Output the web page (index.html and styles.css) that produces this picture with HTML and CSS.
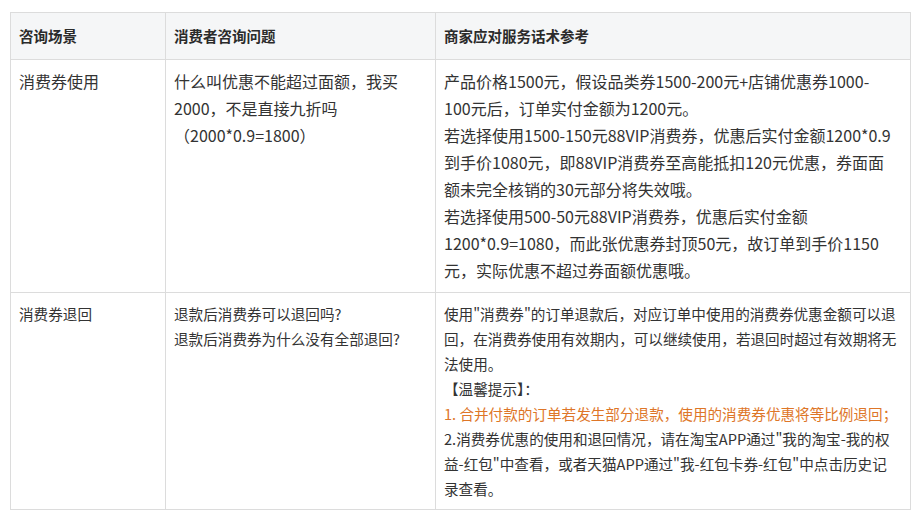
FILE: index.html
```html
<!DOCTYPE html>
<html lang="zh-CN">
<head>
<meta charset="utf-8">
<title>消费券咨询</title>
<link rel="stylesheet" href="styles.css">
</head>
<body>
<div class="page">
  <table class="faq">
    <colgroup>
      <col class="c1">
      <col class="c2">
      <col class="c3">
    </colgroup>
    <thead>
      <tr>
        <th>咨询场景</th>
        <th>消费者咨询问题</th>
        <th>商家应对服务话术参考</th>
      </tr>
    </thead>
    <tbody>
      <tr class="row-use">
        <td>消费券使用</td>
        <td>什么叫优惠不能超过面额，我买<br>2000，不是直接九折吗<br>（2000*0.9=1800）</td>
        <td>产品价格1500元，假设品类券1500-200元+店铺优惠券1000-<br>100元后，订单实付金额为1200元。<br>若选择使用1500-150元88VIP消费券，优惠后实付金额1200*0.9<br>到手价1080元，即88VIP消费券至高能抵扣120元优惠，券面面<br>额未完全核销的30元部分将失效哦。<br>若选择使用500-50元88VIP消费券，优惠后实付金额<br>1200*0.9=1080，而此张优惠券封顶50元，故订单到手价1150<br>元，实际优惠不超过券面额优惠哦。</td>
      </tr>
      <tr class="row-return">
        <td>消费券退回</td>
        <td>退款后消费券可以退回吗?<br>退款后消费券为什么没有全部退回?</td>
        <td>使用"消费券"的订单退款后，对应订单中使用的消费券优惠金额可以退<br>回，在消费券使用有效期内，可以继续使用，若退回时超过有效期将无<br>法使用。<br>【温馨提示】：<br><span class="tip">1. 合并付款的订单若发生部分退款，使用的消费券优惠将等比例退回；</span><br>2.消费券优惠的使用和退回情况，请在淘宝APP通过"我的淘宝-我的权<br>益-红包"中查看，或者天猫APP通过"我-红包卡券-红包"中点击历史记<br>录查看。</td>
      </tr>
    </tbody>
  </table>
</div>
</body>
</html>
```

FILE: styles.css
```css
html, body {
  margin: 0;
  padding: 0;
  background: #ffffff;
}

.page {
  padding: 12px 9px 0 10px;
  font-family: "Noto Sans CJK SC", "Noto Sans", sans-serif;
  color: #333333;
}

.faq {
  width: 900px;
  border-collapse: collapse;
  table-layout: fixed;
}

.c1 { width: 155px; }
.c2 { width: 270px; }
.c3 { width: 475px; }

.faq th,
.faq td {
  border: 1px solid #dcdcdc;
  text-align: left;
  vertical-align: top;
  padding: 8px 8px;
  white-space: nowrap;
}

.faq th {
  background: #f5f6f7;
  font-weight: 700;
  font-size: 14.5px;
  line-height: 26px;
  padding: 10px 8px;
  color: #2b2b2b;
}

.row-use td {
  font-size: 16px;
  line-height: 27px;
}

.row-return td {
  font-size: 14.6px;
  line-height: 25px;
}

.tip {
  color: #de7628;
}
```
